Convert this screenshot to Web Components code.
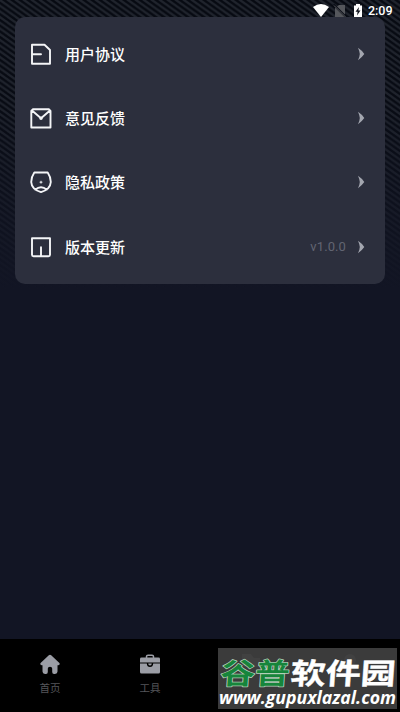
<!DOCTYPE html>
<html lang="zh-CN">
<head>
<meta charset="utf-8">
<title>设置</title>
<style>
html,body{margin:0;height:100%;overflow:hidden;background:#121524}
body{font-family:Roboto,"Noto Sans CJK SC",sans-serif}
</style>
</head>
<body>
<app-screen>
  <status-bar slot="status">2:09</status-bar>
  <menu-row icon="file">用户协议</menu-row>
  <menu-row icon="mail">意见反馈</menu-row>
  <menu-row icon="privacy">隐私政策</menu-row>
  <menu-row icon="version" value="v1.0.0">版本更新</menu-row>
  <tab-item slot="tabs" icon="home">首页</tab-item>
  <tab-item slot="tabs" icon="tool">工具</tab-item>
  <site-mark slot="mark"></site-mark>
</app-screen>
<script>
const ICONS = {
  file: '<path d="M2 1.7H14.5L20 7V20.8H2Z M2 11.2H11"/>',
  mail: '<path d="M3 2.2H18.8L20.5 4V20.5H1.3V4Z M2 3.5L11 11.2L20 3.5" /><circle cx="11" cy="11.2" r=".8"/>',
  privacy: '<path d="M4.3 1.5H17.7Q20.8 6 20.8 11Q20.3 18.5 11 21.1Q1.7 18.5 1.2 11Q1.2 6 4.3 1.5Z M5.3 18.6Q11 14 16.7 18.6"/><path d="M10 11.2H12M11 10.2V12.2" stroke-width="1"/>',
  version: '<path d="M2 2.2H20V18.8Q20 20.3 18.5 20.3H3.5Q2 20.3 2 18.8Z M11 11.2V20"/>',
  home: '<path fill="#9b9da5" d="M8.8 1.2Q10 .2 11.2 1.2L19.4 9Q20.4 10.8 18.3 11.2H17.5V17.6Q17.5 20 15 20H14Q12.2 20 12.2 18V14.5Q12.2 12.8 10 12.8T7.8 14.5V18Q7.8 20 6 20H5Q2.5 20 2.5 17.6V11.2H1.7Q-.4 10.8 .6 9Z"/>',
  tool: '<path fill="none" stroke="#9b9da5" stroke-width="1.5" d="M6.5 4V2.5Q6.5 1.2 8 1.2H12Q13.5 1.2 13.5 2.5V4"/><path fill="#9b9da5" d="M1.5 3.6H18.5Q20 3.6 20 5V8.4H0V5Q0 3.6 1.5 3.6ZM0 9.5H6.8Q7 13 10 13T13.2 9.5H20V18Q20 19.5 18.5 19.5H1.5Q0 19.5 0 18Z"/><path fill="#9b9da5" d="M8.2 9.5H11.8Q11.8 11.6 10 11.6T8.2 9.5Z"/>'
};
class Base extends HTMLElement {
  constructor(){ super(); this.attachShadow({mode:'open'}); }
  connectedCallback(){ this.shadowRoot.innerHTML = this.render(); }
}
customElements.define('app-screen', class extends Base {
  render(){ return `<style>
    :host{display:grid;grid-template-rows:17px 1fr 73px;width:400px;height:712px;position:relative;background:#121524;overflow:hidden}
    .texture{position:absolute;inset:0 0 auto;width:400px;height:290px}
    ::slotted(status-bar){position:relative}
    main{position:relative;padding:0 15px}
    .card{box-sizing:border-box;height:267px;padding:5px 0;background:#2c2f3d;border-radius:10px}
    nav{position:relative;background:#000;display:grid;grid-template-columns:repeat(4,1fr)}
    ::slotted(site-mark){position:absolute;left:218px;top:648px}
    </style>
    <svg class="texture" viewBox="0 0 400 290">
      <defs>
        <pattern id="weave" width="8" height="5.7" patternUnits="userSpaceOnUse">
          <rect width="8" height="5.7" fill="#070a12"/>
          <path d="M-8 -5.7L16 11.4M-8 -11.4L16 5.7M-8 0L16 17.1" stroke="#20242d" stroke-width="2.2"/>
        </pattern>
        <linearGradient id="fade" x2="0" y2="1"><stop stop-color="#121524" stop-opacity="0"/><stop offset=".35" stop-color="#121524" stop-opacity=".08"/><stop offset=".7" stop-color="#121524" stop-opacity=".6"/><stop offset="1" stop-color="#121524"/></linearGradient>
      </defs>
      <rect width="400" height="290" fill="url(#weave)"/><rect width="400" height="290" fill="url(#fade)"/>
    </svg>
    <slot name="status"></slot><main><div class="card"><slot></slot></div></main>
    <nav><slot name="tabs"></slot></nav><slot name="mark"></slot>`; }
});
customElements.define('status-bar', class extends Base {
  render(){ return `<style>
    :host{display:flex;justify-content:flex-end;align-items:flex-start;height:17px;padding-right:7.5px;color:#fff;font:500 12.5px/22px Roboto,sans-serif}
    svg{display:block;margin-right:4.5px}</style>
    <svg width="50" height="20" viewBox="0 0 50 20">
      <path fill="#fff" d="M0 7Q8 1 16 7L8 17Z"/>
      <path fill="#55575c" d="M26 5H32V17H22V8Z"/><path d="M20.5 4.5L33 17" stroke="#0b0e17" stroke-width="2.2"/><path d="M21 5.5L32.5 17" stroke="#55575c"/>
      <path fill="#fff" d="M41 5.5H43V4H47V5.5H49V17H41Z"/><path fill="#10131c" d="M46 7L42.5 11.8H44.6L44 15.5L47.5 10.5H45.4Z"/>
    </svg><slot></slot>`; }
});
customElements.define('menu-row', class extends Base {
  render(){ return `<style>
    :host{display:flex;align-items:center;height:64.2px;padding:0 20.5px 0 15px;color:#fff;font:500 15px/22px "Noto Sans CJK SC",sans-serif}
    .icon{width:22px;height:22px;margin-right:13px;fill:none;stroke:#f4f5f7;stroke-width:1.9;stroke-linejoin:round;stroke-linecap:round}
    .label{flex:1}.value{color:#626572;font:400 13px/20px Roboto,sans-serif;letter-spacing:.1px;margin-right:10.5px}
    .arrow{width:8px;height:14px;fill:#a3a6af}</style>
    <svg class="icon" viewBox="0 0 22 22">${ICONS[this.getAttribute('icon')]}</svg>
    <span class="label"><slot></slot></span><span class="value">${this.getAttribute('value')||''}</span>
    <svg class="arrow" viewBox="0 0 8 14"><path d="M1 .8Q5 3.5 7.3 7Q5 10.5 1 13.2Q2.8 9 2.8 7T1 .8Z"/></svg>`; }
});
customElements.define('tab-item', class extends Base {
  render(){ return `<style>
    :host{display:flex;flex-direction:column;align-items:center;padding-top:14.5px;color:#55565a;font:400 10.5px/16px "Noto Sans CJK SC",sans-serif}
    svg{width:20px;height:20px;margin-bottom:6.5px}</style>
    <svg viewBox="0 0 20 20">${ICONS[this.getAttribute('icon')]}</svg><slot></slot>`; }
});
customElements.define('site-mark', class extends Base {
  render(){ return `<style>:host{display:block;width:179px;height:61px;background:#3b3b3b}svg{display:block;overflow:visible}</style>
    <svg width="179" height="61" viewBox="0 0 179 61">
      <g fill="#414141"><path d="M24 6H33L36 10H42V19H24Z"/><circle cx="132" cy="12" r="6"/><path d="M123 26Q132 12 141 26Z"/></g>
      <g font-family="Noto Sans CJK SC,sans-serif" font-weight="700" font-size="29" transform="translate(2 35.5) skewX(-4)">
        <text textLength="69" lengthAdjust="spacingAndGlyphs" fill="#16853b" stroke="#b3cfba" stroke-width="1.5" stroke-linejoin="round" paint-order="stroke">谷普</text>
        <text x="70" textLength="105" lengthAdjust="spacingAndGlyphs" fill="#fff" stroke="#fff" stroke-width=".4">软件园</text>
      </g>
      <text x="1" y="56" font-family="Open Sans,sans-serif" font-style="italic" font-weight="700" font-size="17" textLength="177" lengthAdjust="spacingAndGlyphs" fill="#fff">www.gupuxlazal.com</text>
    </svg>`; }
});
</script>
</body>
</html>
